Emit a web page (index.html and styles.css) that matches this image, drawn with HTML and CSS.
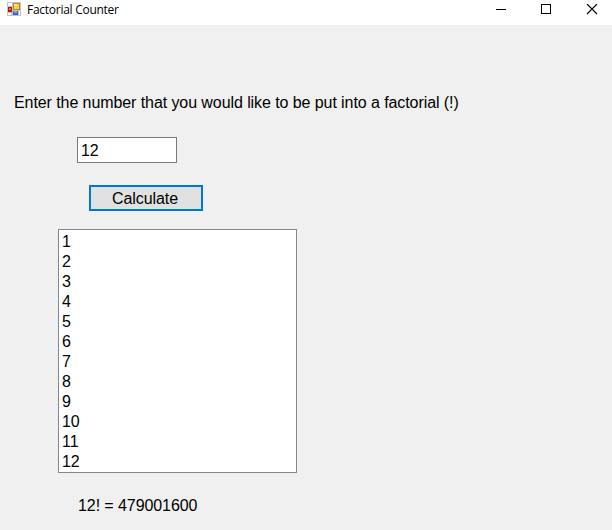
FILE: index.html
```html
<!DOCTYPE html>
<html lang="en">
<head>
<meta charset="utf-8">
<title>Factorial Counter</title>
<link rel="stylesheet" href="styles.css">
</head>
<body>
<header class="titlebar">
  <svg class="app-icon" width="14" height="14" viewBox="0 0 14 14" shape-rendering="crispEdges">
    <rect width="14" height="14" fill="#c3c3c3"/>
    <path fill="#fff" d="M1 1h4v3H1zM1 11h3v2H1zM12 9h1v4h-1z"/>
    <rect x="6" y="1" width="7" height="7" fill="#c08a10"/>
    <rect x="7" y="2" width="5" height="5" fill="#f8ce50"/>
    <rect x="7" y="2" width="3" height="2" fill="#ffe79b"/>
    <rect x="1" y="5" width="4" height="5" fill="#a51e18"/>
    <rect x="2" y="6" width="2" height="2" fill="#e86a60"/>
    <rect x="6" y="9" width="5" height="4" fill="#3566cf"/>
    <rect x="7" y="9" width="3" height="2" fill="#76a6f5"/>
  </svg>
  <span class="title">Factorial Counter</span>
  <svg class="controls" width="104" height="12" viewBox="0 0 104 12" fill="none" stroke="#000">
    <path d="M0 5.5h10M45.500 .5h9v9h-9z" shape-rendering="crispEdges"/>
    <path d="M91 0l10 10M101 0l-10 10" stroke-width="1.15"/>
  </svg>
</header>
<main class="form">
  <label class="prompt" for="number">Enter the number that you would like to be put into a factorial (!)</label>
  <input class="number" id="number" value="12">
  <button class="calculate">Calculate</button>
  <ul class="list"><li>1</li><li>2</li><li>3</li><li>4</li><li>5</li><li>6</li><li>7</li><li>8</li><li>9</li><li>10</li><li>11</li><li>12</li></ul>
  <output class="result">12! = 479001600</output>
</main>
</body>
</html>
```
FILE: styles.css
```css
* { box-sizing: border-box; }
body {
  margin: 0;
  height: 530px;
  overflow: hidden;
  background: #f0f0f0;
  color: #000;
  font: 16px/20px "Liberation Sans", Arial, sans-serif;
  letter-spacing: -0.08px;
}
.titlebar {
  display: flex;
  height: 25px;
  padding: 2px 12px 0 7px;
  background: #fff;
}
.title {
  margin-left: 6px;
  font: 12px/15px "Open Sans", "Noto Sans", sans-serif;
  letter-spacing: -0.27px;
}
.controls { margin: 2px 0 0 auto; }
.form {
  display: flex;
  flex-direction: column;
  align-items: flex-start;
  padding-top: 68px;
}
.prompt { margin-left: 14px; white-space: nowrap; }
.number {
  width: 100px;
  height: 26px;
  margin: 24px 0 0 77px;
  padding: 2px 3px 0;
  border: 1px solid #7a7a7a;
  background: #fff;
  color: inherit;
  font: inherit;
  letter-spacing: inherit;
}
.calculate {
  width: 114px;
  height: 26px;
  margin: 22px 0 0 89px;
  padding: 1px 2px 0 0;
  border: 2px solid #0078d7;
  border-radius: 0;
  background: #e1e1e1;
  color: inherit;
  font: inherit;
  letter-spacing: inherit;
}
.list {
  width: 239px;
  height: 244px;
  margin: 18px 0 0 58px;
  padding: 2px 3px 0;
  border: 1px solid #828790;
  background: #fff;
  list-style: none;
}
.result { margin: 23px 0 0 78px; }
```
